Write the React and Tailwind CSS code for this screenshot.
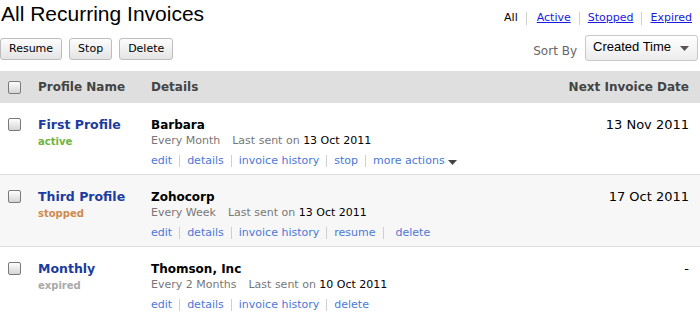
import React from "react";

const Check = () => (
  <span className="inline-block w-[13px] h-[13px] border border-[#7a7a7a] rounded-[2px] bg-linear-to-b from-white to-[#d4d4d4]" />
);

const Sep = ({ wide }) => (
  <span className={`inline-block w-px h-[12px] bg-[#cfcfcf] ml-[7px] ${wide ? "mr-[12px]" : "mr-[7px]"}`} />
);

const profiles = [
  {
    name: "First Profile",
    status: "active",
    statusColor: "text-[#6db33f]",
    customer: "Barbara",
    freq: "Every Month",
    last: "13 Oct 2011",
    next: "13 Nov 2011",
    actions: ["edit", "details", "invoice history", "stop", "more actions"],
    bg: "bg-white",
  },
  {
    name: "Third Profile",
    status: "stopped",
    statusColor: "text-[#cf8a4f]",
    customer: "Zohocorp",
    freq: "Every Week",
    last: "13 Oct 2011",
    next: "17 Oct 2011",
    actions: ["edit", "details", "invoice history", "resume", "delete"],
    bg: "bg-[#f7f7f7]",
  },
  {
    name: "Monthly",
    status: "expired",
    statusColor: "text-[#a9a9a9]",
    customer: "Thomson, Inc",
    freq: "Every 2 Months",
    last: "10 Oct 2011",
    next: "-",
    actions: ["edit", "details", "invoice history", "delete"],
    bg: "bg-white",
  },
];

const Button = ({ children }) => (
  <button className="h-[22px] px-[8px] border border-[#bdbdbd] rounded-[3px] bg-linear-to-b from-[#fdfdfd] to-[#e4e4e4] text-[11px] text-black leading-none">
    {children}
  </button>
);

export default function App() {
  return (
    <div className="w-[700px] h-[318px] overflow-hidden bg-white font-['DejaVu_Sans',sans-serif]">
      {/* top */}
      <div className="flex justify-between h-[28px]">
        <h1 className="pl-[1px] text-[21px] leading-[28px] font-['Liberation_Sans',Arial,sans-serif] text-black">
          All Recurring Invoices
        </h1>
        <div className="flex items-center self-start pt-[11px] pr-[8px] text-[11px] leading-[14px]">
          <span className="text-black">All</span>
          <span className="inline-block w-px h-[13px] bg-[#d0d0d0] ml-[8px] mr-[10px]" />
          <a className="text-[#1a1ae0] underline">Active</a>
          <span className="inline-block w-px h-[13px] bg-[#d0d0d0] mx-[8px]" />
          <a className="text-[#1a1ae0] underline">Stopped</a>
          <span className="inline-block w-px h-[13px] bg-[#d0d0d0] mx-[8px]" />
          <a className="text-[#1a1ae0] underline">Expired</a>
        </div>
      </div>

      <div className="flex justify-between items-center h-[26px] mt-[7px]">
        <div className="flex items-center gap-[7px] pt-[1px]">
          <Button>Resume</Button>
          <Button>Stop</Button>
          <Button>Delete</Button>
        </div>
        <div className="flex items-center pr-[2px]">
          <span className="text-[12px] text-[#666] mr-[8px] pt-[6px]">Sort By</span>
          <div className="flex items-center justify-between w-[113px] h-[26px] pl-[7px] pr-[8px] border border-[#c8c8c8] rounded-[3px] bg-linear-to-b from-white to-[#ececec]">
            <span className="text-[13px] text-black font-['Liberation_Sans',Arial,sans-serif] pb-[2px]">
              Created Time
            </span>
            <svg width="9" height="5" viewBox="0 0 9 5">
              <path d="M0 0h9L4.5 5z" fill="#555" />
            </svg>
          </div>
        </div>
      </div>

      {/* header */}
      <div className="flex items-center h-[32px] mt-[10px] bg-[#dfdfdf] text-[12px] font-bold text-[#444]">
        <div className="w-[38px] pl-[8px] flex">
          <Check />
        </div>
        <div className="w-[113px]">Profile Name</div>
        <div className="flex-1">Details</div>
        <div className="pr-[11px]">Next Invoice Date</div>
      </div>

      {profiles.map((p) => (
        <div
          key={p.name}
          className={`flex items-start h-[72px] pt-[14px] border-b border-[#dedede] ${p.bg}`}
        >
          <div className="w-[38px] pl-[8px] pt-[1px] flex">
            <Check />
          </div>
          <div className="w-[113px]">
            <div className="h-[16px] leading-[16px] text-[12.5px] font-bold text-[#1b3ba0]">
              {p.name}
            </div>
            <div className={`h-[16px] leading-[18px] text-[10px] font-bold ${p.statusColor}`}>
              {p.status}
            </div>
          </div>
          <div className="flex-1">
            <div className="h-[16px] leading-[16px] text-[12px] font-bold text-black">
              {p.customer}
            </div>
            <div className="h-[16px] leading-[16px] text-[11px] text-[#777]">
              {p.freq}
              <span className="ml-[12px]">Last sent on </span>
              <span className="text-black">{p.last}</span>
            </div>
            <div className="flex items-center h-[16px] mt-[4px] text-[11px] text-[#4a78d8]">
              {p.actions.map((a, i) => (
                <React.Fragment key={a}>
                  {i > 0 && <Sep wide={a === "delete" && p.name === "Third Profile"} />}
                  <a>{a}</a>
                  {a === "more actions" && (
                    <svg width="9" height="5" viewBox="0 0 9 5" className="ml-[3px] mt-[2px]">
                      <path d="M0 0h9L4.5 5z" fill="#444" />
                    </svg>
                  )}
                </React.Fragment>
              ))}
            </div>
          </div>
          <div className="pr-[11px] h-[16px] leading-[16px] text-[13px] text-black">{p.next}</div>
        </div>
      ))}
    </div>
  );
}
